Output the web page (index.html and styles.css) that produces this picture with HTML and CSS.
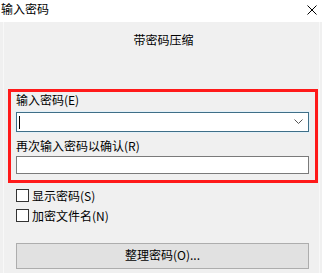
FILE: index.html
```html
<!DOCTYPE html>
<html lang="zh-CN">
<head>
    <meta charset="UTF-8">
    <title>输入密码</title>
    <link rel="stylesheet" href="styles.css">
</head>
<body>

<div class="titlebar">
    <span class="title">输入密码</span>
    <svg class="close" width="10" height="10" viewBox="0 0 10 10">
        <path d="M0.5 0.5 L9.5 9.5 M9.5 0.5 L0.5 9.5" stroke="#000" stroke-width="1" fill="none"/>
    </svg>
</div>

<div class="content">
    <div class="panel">
        <h2 class="heading">带密码压缩</h2>

        <div class="password-box">
            <label class="field-label">输入密码(E)</label>
            <div class="combo">
                <span class="caret"></span>
                <svg class="chevron" width="9" height="6" viewBox="0 0 9 6">
                    <path d="M0.5 0.5 L4.5 4.5 L8.5 0.5" stroke="#555" stroke-width="1" fill="none"/>
                </svg>
            </div>
            <label class="field-label second">再次输入密码以确认(R)</label>
            <div class="textbox"></div>
        </div>

        <div class="checks">
            <div class="check-row"><span class="box"></span>显示密码(S)</div>
            <div class="check-row"><span class="box"></span>加密文件名(N)</div>
        </div>

        <div class="button">整理密码(O)...</div>
    </div>
</div>

</body>
</html>
```

FILE: styles.css
```css
body {
    margin: 0;
    width: 322px;
    height: 273px;
    overflow: hidden;
    font-family: "Noto Sans CJK SC", "Liberation Sans", sans-serif;
    font-size: 12px;
    color: #000;
    background-color: #f0f0f0;
}

.titlebar {
    height: 22px;
    background-color: #fff;
    display: flex;
    align-items: flex-start;
    justify-content: space-between;
}

.title {
    font-size: 12px;
    line-height: 14px;
    margin: 2px 0 0 1px;
}

.close {
    margin: 5px 5px 0 0;
}

.content {
    height: 251px;
    background-color: #f0f0f0;
}

.panel {
    margin: 0 2px 0 3px;
    height: 100%;
    border-left: 1px solid #f8f8f8;
    border-right: 1px solid #f8f8f8;
}

.heading {
    margin: 0;
    padding-top: 11px;
    font-size: 12px;
    font-weight: normal;
    line-height: 14px;
    text-align: center;
    padding-left: 4px;
}

.password-box {
    margin: 42px 0 0 4px;
    width: 293px;
    border: 3px solid #ff1a1a;
    padding: 1px 6px 6px 5px;
}

.field-label {
    display: block;
    line-height: 14px;
}

.field-label.second {
    margin-top: 7px;
}

.combo {
    margin-top: 5px;
    height: 18px;
    background-color: #fff;
    border: 1px solid #3f6f88;
    box-shadow: 0 0 0 1px #e3f1f9;
    display: flex;
    align-items: center;
    justify-content: space-between;
}

.caret {
    width: 1px;
    height: 13px;
    margin-left: 2px;
    background-color: #000;
}

.chevron {
    margin-right: 5px;
}

.textbox {
    margin-top: 3px;
    height: 16px;
    background-color: #fff;
    border: 1px solid #7a7a7a;
}

.checks {
    margin: 6px 0 0 12px;
}

.check-row {
    display: flex;
    align-items: center;
    height: 13px;
    line-height: 13px;
    margin-bottom: 7px;
}

.box {
    width: 11px;
    height: 11px;
    border: 1px solid #333;
    background-color: #fff;
    margin-right: 3px;
}

.button {
    margin: 21px 0 0 12px;
    width: 291px;
    height: 24px;
    border: 1px solid #adadad;
    background-color: #e1e1e1;
    text-align: center;
    line-height: 22px;
}
```
